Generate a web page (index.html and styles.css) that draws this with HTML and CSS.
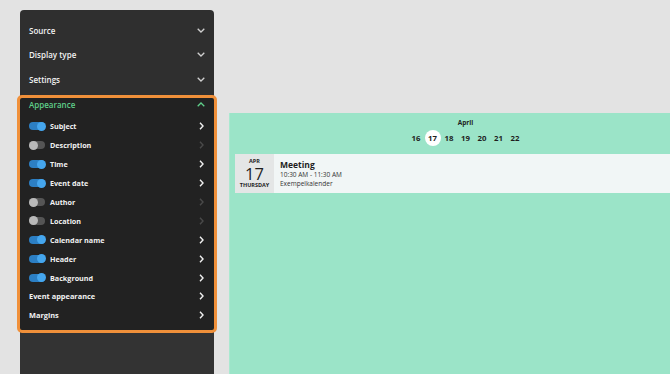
FILE: index.html
```html
<!DOCTYPE html>
<html>
<head>
<meta charset="utf-8">
<link rel="stylesheet" href="styles.css">
</head>
<body>
<div class="page">
  <aside class="sidebar">
    <div class="sec-row"><span>Source</span><svg class="chev-down" viewBox="0 0 8 5"><polyline points="0.7,0.7 4,4 7.3,0.7"/></svg></div>
    <div class="sec-row"><span>Display type</span><svg class="chev-down" viewBox="0 0 8 5"><polyline points="0.7,0.7 4,4 7.3,0.7"/></svg></div>
    <div class="sec-row"><span>Settings</span><svg class="chev-down" viewBox="0 0 8 5"><polyline points="0.7,0.7 4,4 7.3,0.7"/></svg></div>
    <div class="appearance">
      <div class="app-head"><span>Appearance</span><svg class="chev-up" viewBox="0 0 8 5"><polyline points="0.7,4.3 4,1 7.3,4.3"/></svg></div>
      <div class="opts">
        <div class="opt"><span class="tog on"></span><span class="lbl">Subject</span><svg class="chev-r" viewBox="0 0 5 8"><polyline points="1,0.8 4,4 1,7.2"/></svg></div>
        <div class="opt"><span class="tog"></span><span class="lbl">Description</span><svg class="chev-r dim" viewBox="0 0 5 8"><polyline points="1,0.8 4,4 1,7.2"/></svg></div>
        <div class="opt"><span class="tog on"></span><span class="lbl">Time</span><svg class="chev-r" viewBox="0 0 5 8"><polyline points="1,0.8 4,4 1,7.2"/></svg></div>
        <div class="opt"><span class="tog on"></span><span class="lbl">Event date</span><svg class="chev-r" viewBox="0 0 5 8"><polyline points="1,0.8 4,4 1,7.2"/></svg></div>
        <div class="opt"><span class="tog"></span><span class="lbl">Author</span><svg class="chev-r dim" viewBox="0 0 5 8"><polyline points="1,0.8 4,4 1,7.2"/></svg></div>
        <div class="opt"><span class="tog"></span><span class="lbl">Location</span><svg class="chev-r dim" viewBox="0 0 5 8"><polyline points="1,0.8 4,4 1,7.2"/></svg></div>
        <div class="opt"><span class="tog on"></span><span class="lbl">Calendar name</span><svg class="chev-r" viewBox="0 0 5 8"><polyline points="1,0.8 4,4 1,7.2"/></svg></div>
        <div class="opt"><span class="tog on"></span><span class="lbl">Header</span><svg class="chev-r" viewBox="0 0 5 8"><polyline points="1,0.8 4,4 1,7.2"/></svg></div>
        <div class="opt"><span class="tog on"></span><span class="lbl">Background</span><svg class="chev-r" viewBox="0 0 5 8"><polyline points="1,0.8 4,4 1,7.2"/></svg></div>
        <div class="opt"><span class="lbl plain">Event appearance</span><svg class="chev-r" viewBox="0 0 5 8"><polyline points="1,0.8 4,4 1,7.2"/></svg></div>
        <div class="opt"><span class="lbl plain">Margins</span><svg class="chev-r" viewBox="0 0 5 8"><polyline points="1,0.8 4,4 1,7.2"/></svg></div>
      </div>
    </div>
    <div class="rest"></div>
  </aside>
  <main class="preview">
    <div class="cal-head">
      <div class="month">April</div>
      <div class="days">
        <span class="day">16</span>
        <span class="day today">17</span>
        <span class="day">18</span>
        <span class="day">19</span>
        <span class="day">20</span>
        <span class="day">21</span>
        <span class="day">22</span>
      </div>
    </div>
    <div class="event">
      <div class="date">
        <span class="mon">APR</span>
        <span class="num">17</span>
        <span class="wd">THURSDAY</span>
      </div>
      <div class="info">
        <div class="title">Meeting</div>
        <div class="meta">10:30 AM - 11:30 AM</div>
        <div class="meta">Exempelkalender</div>
      </div>
    </div>
  </main>
</div>
</body>
</html>
```

FILE: styles.css
```css
* { box-sizing: border-box; }
html, body { margin: 0; padding: 0; }
body {
  background: #e3e3e3;
  font-family: "Open Sans", "Noto Sans", sans-serif;
  width: 670px;
  height: 374px;
  overflow: hidden;
}
.page {
  display: flex;
  height: 374px;
}
.sidebar {
  width: 194px;
  margin-left: 20px;
  margin-top: 10px;
  background: #2f2f2f;
  border-radius: 4px 4px 0 0;
  display: flex;
  flex-direction: column;
  padding-top: 8px;
  flex-shrink: 0;
}
.sec-row {
  height: 24.5px;
  display: flex;
  align-items: center;
  justify-content: space-between;
  padding: 0 9px 0 9px;
  color: #f2f2f2;
  font-size: 8px;
  font-weight: 600;
}
.chev-down, .chev-up {
  width: 8px;
  height: 5px;
  fill: none;
  stroke: #cfcfcf;
  stroke-width: 1.3;
}
.chev-up { stroke: #5fcf8a; }
.appearance {
  margin: 3.5px -3px 0 -3px;
  border: 3px solid #f0903a;
  border-radius: 5px;
  background: #222222;
  padding-bottom: 5px;
}
.app-head {
  height: 13px;
  display: flex;
  align-items: center;
  justify-content: space-between;
  padding: 0 9px;
  color: #5fcf8a;
  font-size: 8px;
  font-weight: 600;
}
.opts { padding-top: 6px; }
.opt {
  height: 18.9px;
  display: flex;
  align-items: center;
  padding: 0 9px;
  color: #f2f2f2;
  font-size: 7.2px;
  font-weight: 700;
}
.tog {
  position: relative;
  width: 16px;
  height: 8px;
  border-radius: 4px;
  background: #555555;
  margin-right: 5px;
  flex-shrink: 0;
}
.tog::after {
  content: "";
  position: absolute;
  top: -0.5px;
  left: -0.5px;
  width: 9px;
  height: 9px;
  border-radius: 50%;
  background: #b9b9b9;
}
.tog.on { background: #2c7fc4; }
.tog.on::after { left: auto; right: -0.5px; background: #45a6ee; }
.lbl { flex: 1; }
.lbl.plain { font-size: 7.4px; }
.chev-r {
  width: 5px;
  height: 8px;
  fill: none;
  stroke: #f0f0f0;
  stroke-width: 1.4;
  margin-right: 1px;
}
.chev-r.dim { stroke: #4a4a4a; }
.rest { flex: 1; background: #333333; }

.preview {
  margin-left: 15px;
  margin-top: 113px;
  flex: 1;
  background: #9be4c8;
  padding-top: 5px;
  border-left: 1px solid #a9e9d0;
}
.cal-head {
  padding-left: 31px;
  display: flex;
  flex-direction: column;
  align-items: center;
}
.month {
  font-size: 6.5px;
  font-weight: 700;
  line-height: 9px;
  color: #1e1e1e;
}
.days {
  display: flex;
  gap: 0.5px;
  margin-top: 3px;
}
.day {
  width: 16px;
  height: 16px;
  display: flex;
  align-items: center;
  justify-content: center;
  font-size: 7.8px;
  font-weight: 700;
  color: #1e1e1e;
}
.day.today {
  background: #ffffff;
  border-radius: 50%;
}
.event {
  margin: 8px 0 0 5px;
  height: 39px;
  display: flex;
  background: #f1f6f6;
}
.date {
  width: 39px;
  background: #e4e6e6;
  display: flex;
  flex-direction: column;
  align-items: center;
  justify-content: center;
  color: #1e1e1e;
}
.mon { font-size: 5.5px; font-weight: 700; line-height: 7px; }
.num { font-size: 16.5px; font-weight: 400; line-height: 17px; }
.wd { font-size: 5.5px; font-weight: 700; line-height: 7px; }
.info {
  padding: 5px 0 0 6px;
  color: #1e1e1e;
}
.title { font-size: 8.5px; font-weight: 700; line-height: 11px; }
.meta { font-size: 6.5px; line-height: 9px; color: #333; }
```
